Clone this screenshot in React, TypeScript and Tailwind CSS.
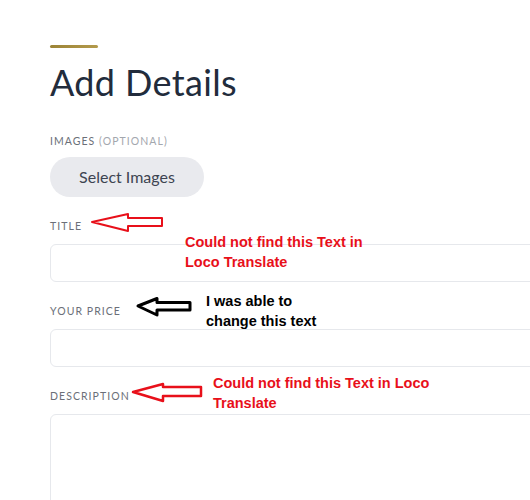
const labelCls = "text-[10.5px] uppercase tracking-[0.1em] text-[#6b6f78] leading-[14px]";

function Field({ label, boxCls }: { label: string; boxCls: string }) {
  return (
    <div className="mt-[22px]">
      <div className={labelCls}>{label}</div>
      <div className={`mt-[11px] w-[540px] rounded-[6px] border border-[#e6e8ec] bg-white ${boxCls}`} />
    </div>
  );
}

function Notes() {
  return (
    <div className="pointer-events-none absolute inset-0 font-['Liberation_Sans',Arial,sans-serif] text-[14.5px] font-bold leading-[20px]">
      <svg className="absolute left-0 top-0" width="530" height="500" viewBox="0 0 530 500" fill="none">
        <polygon
          points="92,222 128,214 128,218 162,218 162,226 128,226 128,231"
          stroke="#e8101a"
          strokeWidth="2"
          strokeLinejoin="round"
        />
        <polygon
          points="138,306 157,298.5 157,302.5 190,302.5 190,310 157,310 157,315"
          stroke="#000"
          strokeWidth="3"
          strokeLinejoin="round"
        />
        <polygon
          points="133,392 163,384 163,387 201,387 201,396 163,396 163,401"
          stroke="#e8101a"
          strokeWidth="2.5"
          strokeLinejoin="round"
        />
      </svg>
      <div className="absolute left-[185px] top-[232px] text-[#e8101a]">
        Could not find this Text in
        <br />
        Loco Translate
      </div>
      <div className="absolute left-[206px] top-[291px] text-black">
        I was able to
        <br />
        change this text
      </div>
      <div className="absolute left-[213px] top-[373px] text-[#e8101a]">
        Could not find this Text in Loco
        <br />
        Translate
      </div>
    </div>
  );
}

export default function App() {
  return (
    <div className="relative h-[500px] w-[530px] overflow-hidden bg-white font-['Lato',sans-serif]">
      <div className="pl-[50px] pt-[45px]">
        <div className="h-[3px] w-[48px] rounded-full bg-gradient-to-r from-[#9c8436] to-[#b39a4c]" />
        <h1 className="mt-[12px] text-[36px] font-normal leading-[44px] tracking-[0.01em] text-[#222c3c]">
          Add Details
        </h1>
        <div className={`mt-[30px] ${labelCls}`}>
          Images <span className="text-[#a3a7ae]">(Optional)</span>
        </div>
        <button className="mt-[9px] h-[40px] w-[154px] rounded-full bg-[#e9eaee] text-[16px] text-[#3d4451]">
          Select Images
        </button>
        <Field label="Title" boxCls="h-[38px]" />
        <Field label="Your Price" boxCls="h-[38px]" />
        <Field label="Description" boxCls="h-[120px]" />
      </div>
      <Notes />
    </div>
  );
}
